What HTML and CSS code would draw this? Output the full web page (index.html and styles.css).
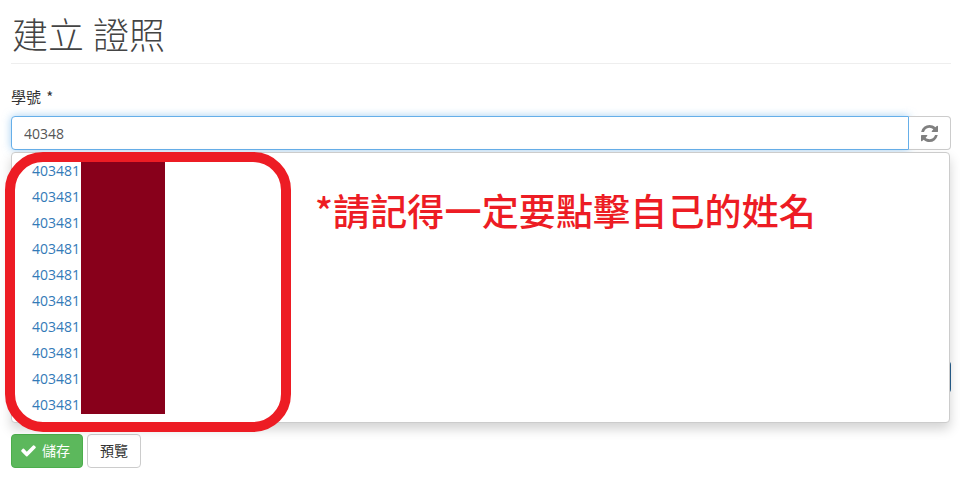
FILE: index.html
```html
<!DOCTYPE html>
<html lang="zh-Hant">
<head>
    <meta charset="UTF-8">
    <title>建立 證照</title>
    <link rel="stylesheet" href="styles.css">
</head>
<body>
    <div class="page">
        <h1 class="page-title">建立 證照</h1>

        <form class="cert-form">
            <label class="field-label" for="studentId">學號 *</label>
            <div class="input-group">
                <input class="form-control" id="studentId" type="text" value="40348">
                <button class="btn-refresh" type="button" aria-label="refresh">
                    <svg viewBox="0 0 1536 1536" width="17" height="17">
                        <path fill="#808080" d="M1511 928q0 5-1 7-64 268-268 434.500T764 1536q-146 0-282.500-55T238 1324l-129 129q-19 19-45 19t-45-19-19-45V960q0-26 19-45t45-19h448q26 0 45 19t19 45-19 45l-137 137q71 66 161 102t187 36q134 0 250-65t186-179q11-17 53-117 8-23 30-23h192q13 0 22.500 9.500t9.500 22.500zm25-800v448q0 26-19 45t-45 19h-448q-26 0-45-19t-19-45 19-45l138-138q-148-137-349-137-134 0-250 65T332 500q-11 17-53 117-8 23-30 23H50q-13 0-22.500-9.500T18 608v-7q65-268 270-434.500T768 0q146 0 284 55.500T1297 212l130-129q19-19 45-19t45 19 19 45z"/>
                    </svg>
                </button>

                <ul class="suggest-menu">
                    <li><a href="#">403481</a></li>
                    <li><a href="#">403481</a></li>
                    <li><a href="#">403481</a></li>
                    <li><a href="#">403481</a></li>
                    <li><a href="#">403481</a></li>
                    <li><a href="#">403481</a></li>
                    <li><a href="#">403481</a></li>
                    <li><a href="#">403481</a></li>
                    <li><a href="#">403481</a></li>
                    <li><a href="#">403481</a></li>
                </ul>
            </div>

            <!-- hidden by the menu, only its right edge shows -->
            <div class="covered-row">
                <span class="covered-btn"></span>
            </div>

            <div class="form-actions">
                <button class="btn btn-save" type="button">
                    <svg viewBox="0 0 1792 1792" width="17" height="17">
                        <path fill="#fff" d="M1671 566q0 40-28 68l-724 724-136 136q-28 28-68 28t-68-28l-136-136-362-362q-28-28-28-68t28-68l136-136q28-28 68-28t68 28l294 295 656-657q28-28 68-28t68 28l136 136q28 28 28 68z"/>
                    </svg>
                    儲存
                </button>
                <button class="btn btn-preview" type="button">預覽</button>
            </div>
        </form>
    </div>

    <!-- annotations drawn on top of the screenshot -->
    <div class="redact-bar"></div>
    <div class="red-ring"></div>
    <div class="red-note">*請記得一定要點擊自己的姓名</div>
</body>
</html>
```

FILE: styles.css
```css
* {
    box-sizing: border-box;
}
body {
    margin: 0;
    background-color: #fff;
    color: #333;
    font-family: "Open Sans", "Noto Sans CJK TC", sans-serif;
    font-size: 14px;
    overflow: hidden;
}
.page {
    padding: 0 9px 0 11px;
}
.page-title {
    margin: 0;
    height: 64px;
    padding: 11px 0 0 1px;
    border-bottom: 1px solid #eee;
    font-family: "Noto Sans CJK TC", sans-serif;
    font-size: 36px;
    font-weight: 300;
    word-spacing: 1px;
    line-height: 44px;
    color: #444;
}
.cert-form {
    padding-top: 22px;
}
.field-label {
    display: block;
    height: 30px;
    font-family: "Noto Sans CJK TC", sans-serif;
    font-size: 15px;
    word-spacing: 2px;
    line-height: 22px;
}
.input-group {
    position: relative;
    display: flex;
    height: 34px;
}
.form-control {
    flex: 1;
    min-width: 0;
    padding: 0 12px;
    border: 1px solid #66afe9;
    border-radius: 4px 0 0 4px;
    outline: none;
    box-shadow: 0 0 8px rgba(102, 175, 233, 0.6);
    font-family: inherit;
    font-size: 14px;
    color: #555;
}
.btn-refresh {
    display: flex;
    align-items: center;
    justify-content: center;
    width: 42px;
    padding: 0;
    border: 1px solid #ccc;
    border-left: none;
    border-radius: 0 4px 4px 0;
    background-color: #fff;
}
.suggest-menu {
    position: absolute;
    top: 36px;
    left: 0;
    right: 1px;
    height: 271px;
    margin: 0;
    padding: 5px 0 0;
    list-style: none;
    background-color: #fff;
    border: 1px solid #ccc;
    border-radius: 4px;
    box-shadow: 0 6px 12px rgba(0, 0, 0, 0.175);
}
.suggest-menu li {
    height: 26px;
    padding-left: 20px;
    line-height: 26px;
}
.suggest-menu a {
    color: #337ab7;
    text-decoration: none;
}
.covered-row {
    display: flex;
    justify-content: flex-end;
    height: 284px;
    padding-top: 211px;
}
.covered-btn {
    width: 40px;
    height: 32px;
    background-color: #286090;
    border-radius: 0 4px 4px 0;
}
.form-actions {
    display: flex;
    gap: 4px;
}
.btn {
    display: flex;
    align-items: center;
    justify-content: center;
    height: 34px;
    padding: 0 0 2px;
    border-radius: 4px;
    font-family: "Noto Sans CJK TC", sans-serif;
    font-size: 14px;
}
.btn-save {
    gap: 5px;
    width: 72px;
    padding-right: 4px;
    border: 1px solid #4cae4c;
    background-color: #5cb85c;
    color: #fff;
}
.btn-preview {
    width: 54px;
    border: 1px solid #ccc;
    background-color: #fff;
    color: #333;
}
.redact-bar {
    position: absolute;
    left: 81px;
    top: 162px;
    width: 84px;
    height: 252px;
    background-color: #88001b;
}
.red-ring {
    position: absolute;
    left: 5px;
    top: 152px;
    width: 286px;
    height: 280px;
    border: 10px solid #ed1c24;
    border-radius: 38px;
}
.red-note {
    position: absolute;
    left: 315px;
    top: 188px;
    font-family: "Noto Sans CJK TC", sans-serif;
    font-size: 37px;
    font-weight: 500;
    letter-spacing: 0.15px;
    line-height: 44px;
    color: #ed1c24;
    white-space: nowrap;
}
```
